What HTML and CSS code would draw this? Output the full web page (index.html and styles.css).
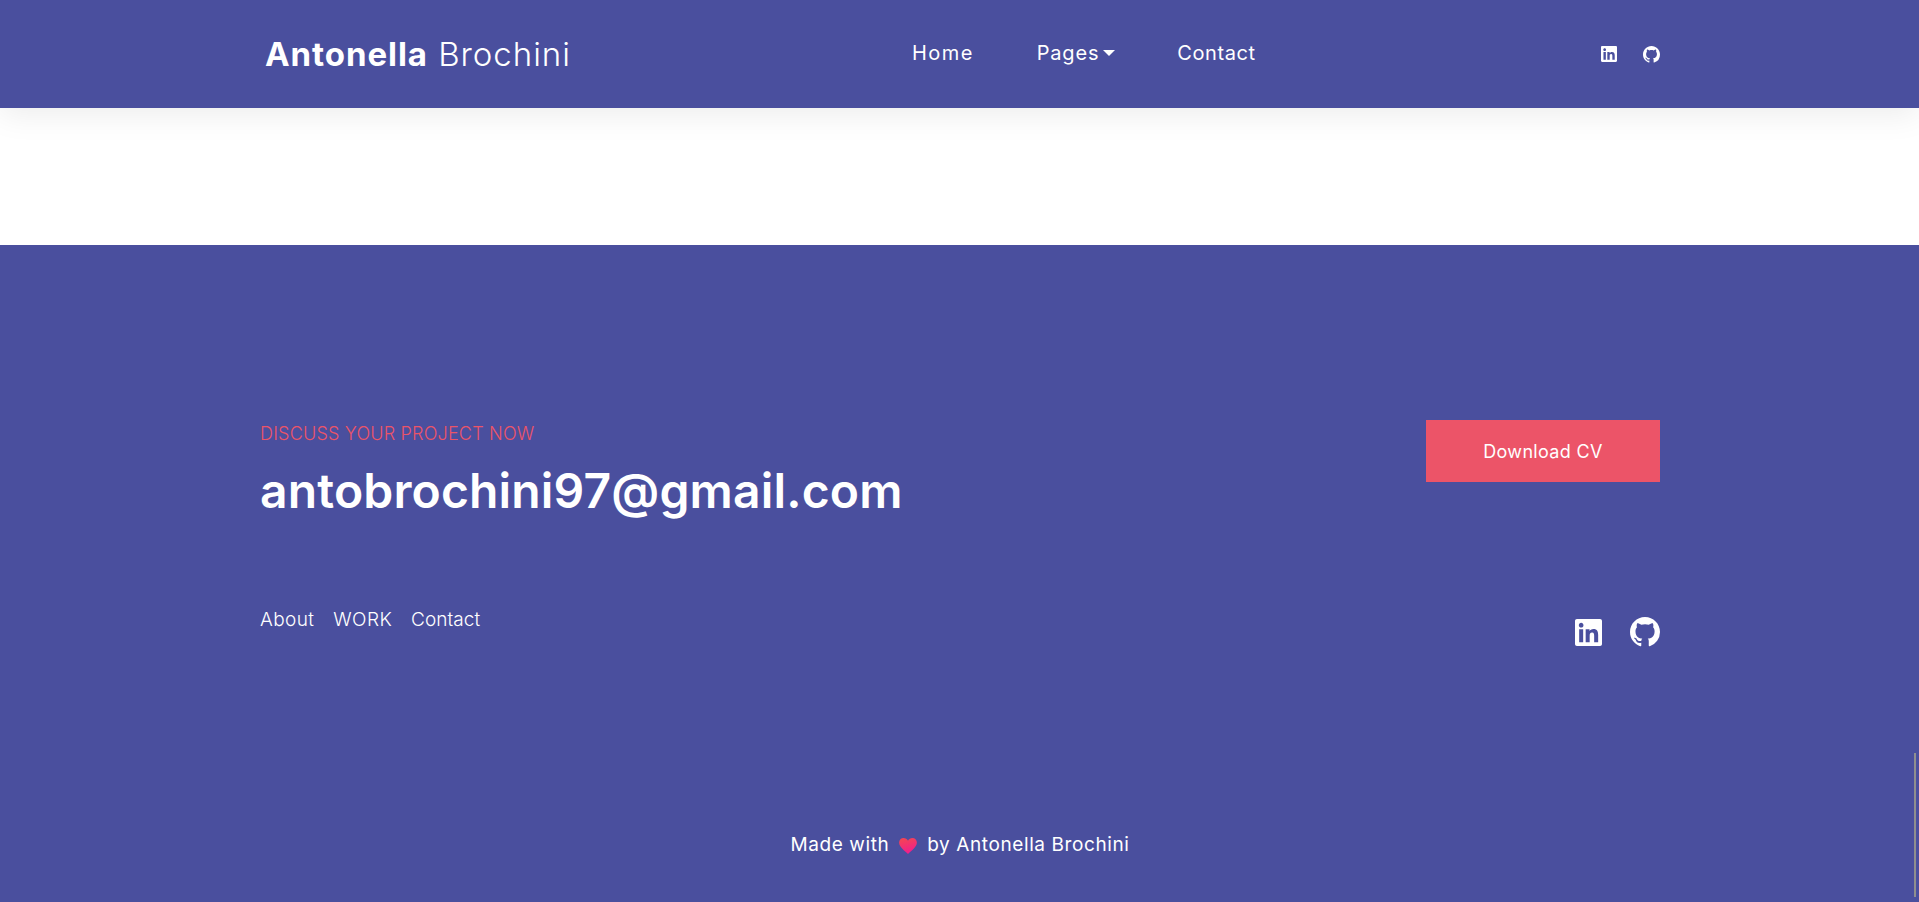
FILE: index.html
```html
<!DOCTYPE html>
<html lang="en">
<head>
<meta charset="utf-8">
<title>Antonella Brochini</title>
<link rel="stylesheet" href="styles.css">
</head>
<body>
<header class="nav">
  <div class="nav-inner">
    <a class="logo"><b>Antonella</b> <span>Brochini</span></a>
    <nav class="nav-links">
      <a class="nav-home">Home</a>
      <a class="pages">Pages<i class="caret"></i></a>
      <a class="nav-contact">Contact</a>
    </nav>
    <div class="nav-social">
      <svg class="ico-li-s" viewBox="0 32 448 448"><path fill="#fff" d="M416 32H31.9C14.3 32 0 46.5 0 64.3v383.4C0 465.5 14.3 480 31.9 480H416c17.6 0 32-14.5 32-32.3V64.3c0-17.8-14.4-32.3-32-32.3zM135.4 416H69V202.2h66.5V416zm-33.2-243c-21.3 0-38.5-17.3-38.5-38.5S80.9 96 102.2 96c21.2 0 38.5 17.3 38.5 38.5 0 21.3-17.2 38.5-38.5 38.5zm282.1 243h-66.4V312c0-24.8-.5-56.7-34.5-56.7-34.6 0-39.9 27-39.9 54.9V416h-66.4V202.2h63.7v29.2h.9c8.9-16.8 30.6-34.5 62.9-34.5 67.2 0 79.7 44.3 79.7 101.9V416z"/></svg>
      <svg class="ico-gh-s" viewBox="0 0 16 16"><path fill="#fff" d="M8 0C3.58 0 0 3.58 0 8c0 3.54 2.29 6.53 5.47 7.59.4.07.55-.17.55-.38 0-.19-.01-.82-.01-1.49-2.01.37-2.53-.49-2.69-.94-.09-.23-.48-.94-.82-1.13-.28-.15-.68-.52-.01-.53.63-.01 1.08.58 1.23.82.72 1.21 1.87.87 2.33.66.07-.52.28-.87.51-1.07-1.78-.2-3.64-.89-3.64-3.95 0-.87.31-1.59.82-2.15-.08-.2-.36-1.02.08-2.12 0 0 .67-.21 2.2.82.64-.18 1.32-.27 2-.27.68 0 1.36.09 2 .27 1.53-1.04 2.2-.82 2.2-.82.44 1.1.16 1.92.08 2.12.51.56.82 1.27.82 2.15 0 3.07-1.87 3.75-3.65 3.95.29.25.54.73.54 1.48 0 1.07-.01 1.93-.01 2.2 0 .21.15.46.55.38A8.013 8.013 0 0016 8c0-4.42-3.58-8-8-8z"/></svg>
    </div>
  </div>
</header>
<main class="blank"></main>
<footer class="footer">
  <div class="footer-inner">
    <div class="cta-row">
      <div class="cta-text">
        <p class="eyebrow">DISCUSS YOUR PROJECT NOW</p>
        <h2 class="email">antobrochini97@gmail.com</h2>
      </div>
      <a class="btn">Download CV</a>
    </div>
    <div class="links-row">
      <ul class="foot-links">
        <li>About</li>
        <li>WORK</li>
        <li class="foot-contact">Contact</li>
      </ul>
      <div class="foot-social">
        <svg class="ico-li-l" viewBox="0 32 448 448"><path fill="#fff" d="M416 32H31.9C14.3 32 0 46.5 0 64.3v383.4C0 465.5 14.3 480 31.9 480H416c17.6 0 32-14.5 32-32.3V64.3c0-17.8-14.4-32.3-32-32.3zM135.4 416H69V202.2h66.5V416zm-33.2-243c-21.3 0-38.5-17.3-38.5-38.5S80.9 96 102.2 96c21.2 0 38.5 17.3 38.5 38.5 0 21.3-17.2 38.5-38.5 38.5zm282.1 243h-66.4V312c0-24.8-.5-56.7-34.5-56.7-34.6 0-39.9 27-39.9 54.9V416h-66.4V202.2h63.7v29.2h.9c8.9-16.8 30.6-34.5 62.9-34.5 67.2 0 79.7 44.3 79.7 101.9V416z"/></svg>
        <svg class="ico-gh-l" viewBox="0 0 16 16"><path fill="#fff" d="M8 0C3.58 0 0 3.58 0 8c0 3.54 2.29 6.53 5.47 7.59.4.07.55-.17.55-.38 0-.19-.01-.82-.01-1.49-2.01.37-2.53-.49-2.69-.94-.09-.23-.48-.94-.82-1.13-.28-.15-.68-.52-.01-.53.63-.01 1.08.58 1.23.82.72 1.21 1.87.87 2.33.66.07-.52.28-.87.51-1.07-1.78-.2-3.64-.89-3.64-3.95 0-.87.31-1.59.82-2.15-.08-.2-.36-1.02.08-2.12 0 0 .67-.21 2.2.82.64-.18 1.32-.27 2-.27.68 0 1.36.09 2 .27 1.53-1.04 2.2-.82 2.2-.82.44 1.1.16 1.92.08 2.12.51.56.82 1.27.82 2.15 0 3.07-1.87 3.75-3.65 3.95.29.25.54.73.54 1.48 0 1.07-.01 1.93-.01 2.2 0 .21.15.46.55.38A8.013 8.013 0 0016 8c0-4.42-3.58-8-8-8z"/></svg>
      </div>
    </div>
    <p class="credit">Made with
      <svg class="heart" viewBox="0 0 20 18"><defs><linearGradient id="hg" x1="0" y1="0" x2="0.3" y2="1"><stop offset="0" stop-color="#f4484f"/><stop offset="1" stop-color="#f01f8c"/></linearGradient></defs><path fill="url(#hg)" d="M10 18C6.500 14.500 0 10.500 0 5.200 0 2.200 2.300 0 5 0c2.100 0 4 1.200 5 3 1-1.800 2.900-3 5-3 2.700 0 5 2.200 5 5.200C20 10.500 13.500 14.500 10 18z"/></svg>
      by Antonella Brochini</p>
  </div>
</footer>
<div class="scroll-thumb"></div>
</body>
</html>
```

FILE: styles.css
```css
* { box-sizing: border-box; }
html, body { margin: 0; padding: 0; height: 902px; overflow: hidden; }
body { font-family: "Inter", "Liberation Sans", sans-serif; color: #fff; background: #fff; }

.nav { height: 108px; background: #4a4f9e; box-shadow: 0 6px 30px rgba(0, 0, 0, .08); position: relative; }
.nav-inner { width: 1400px; height: 100%; margin-left: 260px; display: flex; align-items: center; justify-content: space-between; padding-left: 5px; }
.logo { font-family: "Inter", sans-serif; font-size: 33px; letter-spacing: .95px; white-space: nowrap; }
.logo b { font-weight: 700; }
.logo span { font-weight: 300; }
.nav-links { display: flex; align-items: center; gap: 63px; font-size: 20px; letter-spacing: .8px; margin-left: -4px; padding-bottom: 2px; }
.nav-home { letter-spacing: 1.4px; }
.nav-contact { letter-spacing: .6px; margin-left: -1px; }
.caret { display: inline-block; width: 0; height: 0; margin-left: 4px; vertical-align: 4px; border-top: 6px solid #fff; border-left: 6px solid transparent; border-right: 6px solid transparent; }
.nav-social { display: flex; align-items: center; gap: 26px; }
.ico-li-s { width: 16px; height: 16px; display: block; }
.ico-gh-s { width: 17px; height: 17px; display: block; }

.blank { height: 137px; background: #fff; }

.footer { height: 657px; background: #4a4f9e; }
.footer-inner { width: 1400px; margin-left: 260px; padding-top: 175px; }
.cta-row { display: flex; justify-content: space-between; align-items: flex-start; height: 62px; }
.eyebrow { margin: 0; font-size: 18px; line-height: 24px; padding-top: 2px; letter-spacing: .2px; color: #ec5468; font-weight: 300; }
.email { margin: 17px 0 0; font-size: 48px; line-height: 56px; font-weight: 600; letter-spacing: .16px; white-space: nowrap; }
.btn { width: 234px; height: 62px; display: flex; align-items: center; justify-content: center; background: #ec5468; font-size: 18px; letter-spacing: .33px; }
.links-row { display: flex; justify-content: space-between; align-items: flex-start; margin-top: 126px; }
.foot-links { list-style: none; margin: 0; padding: 0; display: flex; gap: 19px; font-size: 19px; line-height: 24px; letter-spacing: .4px; font-weight: 300; }
.foot-contact { letter-spacing: .05px; }
.foot-social { display: flex; align-items: center; gap: 28px; margin-top: 9px; }
.ico-li-l { width: 27px; height: 27px; display: block; }
.ico-gh-l { width: 30px; height: 30px; display: block; }
.credit { margin: 186px 0 0; text-align: center; font-size: 19px; line-height: 24px; letter-spacing: .6px; }
.heart { width: 18px; height: 16px; vertical-align: -3px; margin: 0 4px; }

.scroll-thumb { position: fixed; left: 1914px; top: 753px; width: 2px; height: 144px; background: #8f8f8f; }
```
